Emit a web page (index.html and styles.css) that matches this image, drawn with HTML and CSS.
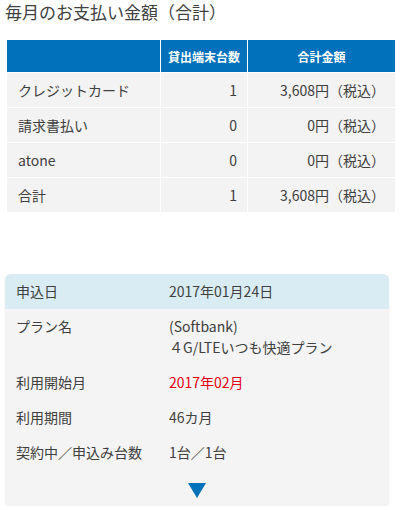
FILE: index.html
```html
<!DOCTYPE html>
<html lang="ja">
<head>
<meta charset="utf-8">
<link rel="stylesheet" href="styles.css">
</head>
<body>
<h2 class="title">毎月のお支払い金額（合計）</h2>
<table class="pay">
  <thead>
    <tr>
      <th class="c1"></th>
      <th class="c2">貸出端末台数</th>
      <th class="c3">合計金額</th>
    </tr>
  </thead>
  <tbody>
    <tr><td>クレジットカード</td><td class="num">1</td><td class="num">3,608円（税込）</td></tr>
    <tr><td>請求書払い</td><td class="num">0</td><td class="num">0円（税込）</td></tr>
    <tr><td>atone</td><td class="num">0</td><td class="num">0円（税込）</td></tr>
    <tr><td>合計</td><td class="num">1</td><td class="num">3,608円（税込）</td></tr>
  </tbody>
</table>

<div class="card">
  <div class="row head"><div class="label">申込日</div><div class="value">2017年01月24日</div></div>
  <div class="row"><div class="label">プラン名</div><div class="value">(Softbank)<br>４G/LTEいつも快適プラン</div></div>
  <div class="row"><div class="label">利用開始月</div><div class="value red">2017年02月</div></div>
  <div class="row"><div class="label">利用期間</div><div class="value">46カ月</div></div>
  <div class="row"><div class="label">契約中／申込み台数</div><div class="value">1台／1台</div></div>
  <div class="more"><span class="arrow"></span></div>
</div>
</body>
</html>
```
FILE: styles.css
```css
* { box-sizing: border-box; }
html, body { margin: 0; padding: 0; background: #fff; }
body {
  font-family: "Noto Sans CJK JP", "Noto Sans", sans-serif;
  color: #404040;
  width: 401px;
  text-spacing-trim: space-all;
}
.title {
  margin: 0;
  padding-left: 5px;
  font-size: 17px;
  font-weight: 400;
  line-height: 24px;
  color: #404040;
}
.pay {
  margin: 15px 0 0 6px;
  border-collapse: separate;
  border-spacing: 1px;
  width: 390px;
  table-layout: fixed;
  font-size: 14px;
}
.pay th {
  background: #0071ba;
  color: #fff;
  font-size: 12px;
  font-weight: 700;
  height: 32px;
  padding: 0;
  text-align: center;
  vertical-align: middle;
}
.pay .c1 { width: 153px; }
.pay .c2 { width: 86px; }
.pay .c3 { width: 147px; }
.pay td {
  background: #f3f3f3;
  height: 34px;
  padding: 0 10px 0 11px;
  vertical-align: middle;
  line-height: 20px;
}
.pay td.num { text-align: right; }

.card {
  margin: 61px 0 0 5px;
  width: 384px;
  background: #f4f4f4;
  border-radius: 6px;
  overflow: hidden;
  box-shadow: 0 1px 2px rgba(0,0,0,0.08);
  font-size: 14px;
  padding-bottom: 8px;
}
.row {
  display: grid;
  grid-template-columns: 164px 1fr;
  padding: 7px 0;
  line-height: 21px;
}
.row.head { background: #d9ecf4; }
.label { padding-left: 11px; }
.red { color: #e60012; }
.more {
  display: flex;
  justify-content: center;
  padding-top: 13px;
}
.arrow {
  width: 0;
  height: 0;
  border-left: 9px solid transparent;
  border-right: 9px solid transparent;
  border-top: 15px solid #0071ba;
}
```
